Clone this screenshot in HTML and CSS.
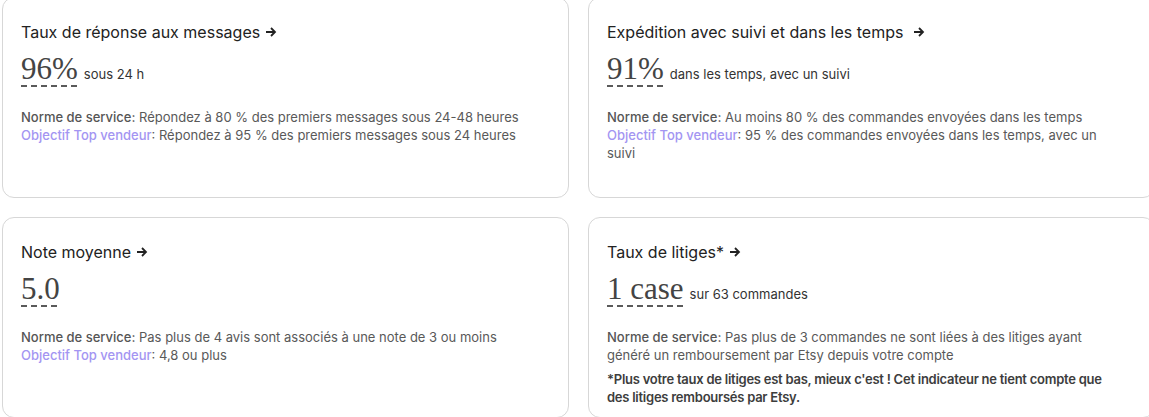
FILE: index.html
```html
<!DOCTYPE html>
<html lang="fr">
<head>
<meta charset="utf-8">
<title>Indicateurs de service</title>
<link rel="stylesheet" href="styles.css">
</head>
<body>
<main class="grid">
  <section class="card">
    <h2 class="title">Taux de réponse aux messages <svg class="arrow" viewBox="0 0 12 10" width="12" height="10"><path d="M1 5h9M6 1l4 4-4 4"/></svg></h2>
    <div class="metric"><span class="num">96%</span><span class="unit">sous 24 h</span></div>
    <div class="body">
      <p><span class="label">Norme de service:</span> Répondez à 80 % des premiers messages sous 24-48 heures</p>
      <p><span class="goal">Objectif Top vendeur</span>: Répondez à 95 % des premiers messages sous 24 heures</p>
    </div>
  </section>
  <section class="card">
    <h2 class="title">Expédition avec suivi et dans les temps&nbsp; <svg class="arrow" viewBox="0 0 12 10" width="12" height="10"><path d="M1 5h9M6 1l4 4-4 4"/></svg></h2>
    <div class="metric"><span class="num">91%</span><span class="unit">dans les temps, avec un suivi</span></div>
    <div class="body">
      <p><span class="label">Norme de service:</span> Au moins 80 % des commandes envoyées dans les temps</p>
      <p><span class="goal">Objectif Top vendeur</span>: 95 % des commandes envoyées dans les temps, avec un suivi</p>
    </div>
  </section>
  <section class="card">
    <h2 class="title">Note moyenne <svg class="arrow" viewBox="0 0 12 10" width="12" height="10"><path d="M1 5h9M6 1l4 4-4 4"/></svg></h2>
    <div class="metric"><span class="num">5.0</span></div>
    <div class="body">
      <p><span class="label">Norme de service:</span> Pas plus de 4 avis sont associés à une note de 3 ou moins</p>
      <p><span class="goal">Objectif Top vendeur</span>: 4,8 ou plus</p>
    </div>
  </section>
  <section class="card">
    <h2 class="title">Taux de litiges* <svg class="arrow" viewBox="0 0 12 10" width="12" height="10"><path d="M1 5h9M6 1l4 4-4 4"/></svg></h2>
    <div class="metric"><span class="num">1 case</span><span class="unit">sur 63 commandes</span></div>
    <div class="body">
      <p><span class="label">Norme de service:</span> Pas plus de 3 commandes ne sont liées à des litiges ayant généré un remboursement par Etsy depuis votre compte</p>
      <p class="note">*Plus votre taux de litiges est bas, mieux c'est ! Cet indicateur ne tient compte que des litiges remboursés par Etsy.</p>
    </div>
  </section>
</main>
</body>
</html>
```

FILE: styles.css
```css
html, body {
  margin: 0;
  padding: 0;
  overflow: hidden;
  background: #ffffff;
}

body {
  font-family: Inter, Roboto, "Liberation Sans", Arial, sans-serif;
  color: #222222;
}

.grid {
  display: grid;
  grid-template-columns: 567px 567px;
  grid-template-rows: 201px 201px;
  column-gap: 19px;
  row-gap: 19px;
  margin: -3px 0 0 2px;
  width: 1160px;
}

.card {
  box-sizing: border-box;
  border: 1px solid #d7d7d7;
  border-radius: 12px;
  padding: 24px 34px 0 18px;
  display: flex;
  flex-direction: column;
}

.title {
  margin: 0;
  font-size: 16px;
  font-weight: 400;
  line-height: 20px;
  color: #222222;
  display: flex;
  align-items: center;
  gap: 5px;
}

.arrow {
  fill: none;
  stroke: #222222;
  stroke-width: 1.8;
  stroke-linecap: butt;
  stroke-linejoin: miter;
}

.metric {
  margin-top: 11px;
  display: flex;
  align-items: baseline;
  gap: 6px;
}

.num {
  display: inline-block;
  font-family: "Liberation Serif", "Times New Roman", serif;
  font-weight: 300;
  font-size: 31px;
  line-height: 32px;
  color: #444444;
  padding-bottom: 2px;
  background-image: repeating-linear-gradient(to right, #5a5a5a 0 6px, transparent 6px 10px);
  background-size: 100% 2px;
  background-position: left bottom;
  background-repeat: no-repeat;
}

.unit {
  font-size: 13px;
  color: #333333;
}

.body {
  margin-top: 21px;
  font-size: 13px;
  line-height: 18px;
  color: #595959;
}

.body p {
  margin: 0;
}

.label {
  font-weight: 500;
  color: #555555;
}

.goal {
  font-weight: 500;
  color: #a395f2;
}

.note {
  margin-top: 6px !important;
  font-weight: 600;
  letter-spacing: -0.25px;
  color: #3d3d3d;
}
```
